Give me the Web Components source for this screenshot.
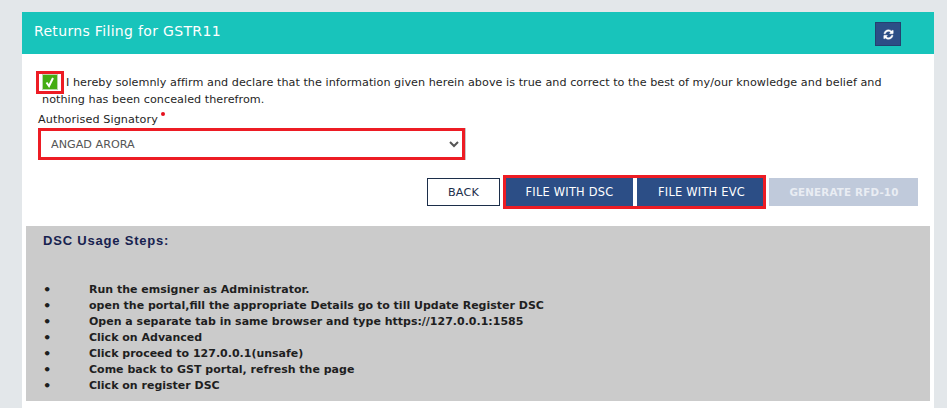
<!DOCTYPE html>
<html lang="en">
<head>
<meta charset="utf-8">
<title>Returns Filing for GSTR11</title>
<style>
  html, body { margin: 0; height: 408px; overflow: hidden; background: #e3e7ea; }
  body { font-family: "DejaVu Sans", Verdana, sans-serif; color: #1f1f1f; }
</style>
</head>
<body>
<filing-page>
  <filing-header title="Returns Filing for GSTR11"></filing-header>
  <filing-affirm>I hereby solemnly affirm and declare that the information given herein above is true and correct to the best of my/our knowledge and belief and nothing has been concealed therefrom.</filing-affirm>
  <filing-select label="Authorised Signatory" value="ANGAD ARORA"></filing-select>
  <filing-actions>
    <filing-button kind="back">BACK</filing-button>
    <filing-button kind="primary" mark="left">FILE WITH DSC</filing-button>
    <filing-button kind="primary" mark="right">FILE WITH EVC</filing-button>
    <filing-button kind="disabled">GENERATE RFD-10</filing-button>
  </filing-actions>
  <usage-steps heading="DSC Usage Steps:">
    <usage-step>Run the emsigner as Administrator.</usage-step>
    <usage-step>open the portal,fill the appropriate Details go to till Update Register DSC</usage-step>
    <usage-step>Open a separate tab in same browser and type https://127.0.0.1:1585</usage-step>
    <usage-step>Click on Advanced</usage-step>
    <usage-step>Click proceed to 127.0.0.1(unsafe)</usage-step>
    <usage-step>Come back to GST portal, refresh the page</usage-step>
    <usage-step>Click on register DSC</usage-step>
  </usage-steps>
</filing-page>
<script>
class FilingPage extends HTMLElement {
  constructor() {
    super();
    this.attachShadow({ mode: "open" }).innerHTML = /* html */`
    <style>
      :host { display: block; margin: 12px 13px 0 22px; background: #fff; height: 396px; overflow: hidden; }
    </style>
    <slot></slot>`;
  }
}

class FilingHeader extends HTMLElement {
  constructor() {
    super();
    this.attachShadow({ mode: "open" });
  }

  connectedCallback() {
    this.shadowRoot.innerHTML = /* html */`
    <style>
      :host {
        display: flex; align-items: center; justify-content: space-between;
        box-sizing: border-box; height: 42px; padding: 0 33px 0 12px;
        background: #18c4bb; color: #fff; font-size: 14px; letter-spacing: 0.33px;
      }
      span { position: relative; top: -2px; }
      button {
        display: flex; align-items: center; justify-content: center;
        box-sizing: border-box; width: 26px; height: 24px; padding: 0; margin-top: 2px;
        background: #2c4e86; border: 1px solid #24406f;
      }
    </style>
    <span>${this.getAttribute("title")}</span>
    <button aria-label="Refresh">
      <svg width="11" height="11" viewBox="0 0 1792 1792" fill="#fff" stroke="#fff" stroke-width="70">
        <path d="M1639 1056q0 5-1 7-64 268-268 434.5t-478 166.5q-146 0-282.5-55t-243.5-157l-129 129q-19 19-45 19t-45-19-19-45v-448q0-26 19-45t45-19h448q26 0 45 19t19 45-19 45l-137 137q71 66 161 102t187 36q134 0 250-65t186-179q11-17 53-117 8-23 30-23h192q13 0 22.5 9.5t9.5 22.5zm25-800v448q0 26-19 45t-45 19h-448q-26 0-45-19t-19-45 19-45l138-138q-148-137-349-137-134 0-250 65t-186 179q-11 17-53 117-8 23-30 23h-199q-13 0-22.5-9.5t-9.5-22.5v-7q65-268 270-434.5t480-166.5q146 0 284 55.5t245 156.5l130-129q19-19 45-19t45 19 19 45z"/>
      </svg>
    </button>`;
  }
}

class FilingAffirm extends HTMLElement {
  constructor() {
    super();
    this.attachShadow({ mode: "open" }).innerHTML = /* html */`
    <style>
      :host { display: block; margin: 20px 30px 0 20px; font-size: 11.2px; line-height: 17px; letter-spacing: 0.04px; }
      .box {
        display: inline-block; position: relative; width: 16px; height: 16px; margin: 0 8px 0 0; vertical-align: -4px;
        background: #44ad12; border: 1px solid #b9d8ab; box-sizing: border-box;
      }
      .box::after {
        content: ""; position: absolute; left: -7px; top: -4px; width: 22px; height: 17px;
        border: 3px solid #ed1c24;
      }
      svg { display: block; }
    </style>
    <span class="box"><svg width="14" height="14" viewBox="0 0 14 14" fill="none" stroke="#fff" stroke-width="2"><path d="M3.5 7.5l2.5 3.5 4-8"/></svg></span><slot></slot>`;
  }
}

class FilingSelect extends HTMLElement {
  constructor() {
    super();
    this.attachShadow({ mode: "open" });
  }

  connectedCallback() {
    const value = this.getAttribute("value");
    this.shadowRoot.innerHTML = /* html */`
    <style>
      :host { display: block; margin: 4px 0 0 16px; font-size: 11.2px; letter-spacing: 0.1px; }
      label { display: block; line-height: 15px; }
      i {
        display: inline-block; width: 4px; height: 4px; margin: 0 0 0 3px; border-radius: 50%;
        background: #e5101d; position: relative; top: -7px;
      }
      select {
        display: block; box-sizing: border-box; width: 427px; height: 32px; margin: 1px 0 0;
        padding: 0 0 0 6px; font: inherit; font-size: 11.2px; letter-spacing: 0; color: #555;
        background: #fff; border: 3px solid #ed1c24; border-radius: 0; box-shadow: 1px 0 0 #c8c8c8;
      }
    </style>
    <label for="s">${this.getAttribute("label")}<i aria-hidden="true"></i></label>
    <select id="s"><option>${value}</option></select>`;
  }
}

class FilingActions extends HTMLElement {
  constructor() {
    super();
    this.attachShadow({ mode: "open" }).innerHTML = /* html */`
    <style>
      :host { display: flex; justify-content: flex-end; gap: 3px; margin: 18px 16px 0 0; }
    </style>
    <slot></slot>`;
  }
}

class FilingButton extends HTMLElement {
  constructor() {
    super();
    this.attachShadow({ mode: "open" }).innerHTML = /* html */`
    <style>
      :host {
        display: flex; align-items: center; justify-content: center; box-sizing: border-box;
        position: relative; height: 28px; font-size: 11.2px; letter-spacing: 0.2px;
      }
      :host([kind="back"]) { width: 73px; background: #fff; border: 1px solid #1c2e4a; color: #1c2e4a; }
      :host([kind="primary"]) { background: #2c4e86; color: #fff; font-size: 11.4px; letter-spacing: 0.25px; }
      :host([mark="left"]) { width: 127px; margin-left: 3px; margin-right: 1px; }
      :host([mark="right"]) { width: 126px; margin-right: 3px; padding-left: 3px; }
      :host([kind="disabled"]) { width: 149px; padding-left: 1px; background: #c0cadb; color: #e9edf3; font-size: 10.3px; font-weight: 700; }
      :host([mark])::after {
        content: ""; position: absolute; top: -3px; bottom: -3px; border: 3px solid #ed1c24;
      }
      :host([mark="left"])::after { left: -3px; right: -2px; border-right: 0; }
      :host([mark="right"])::after { left: -2px; right: -3px; border-left: 0; }
    </style>
    <slot></slot>`;
  }
}

class UsageSteps extends HTMLElement {
  constructor() {
    super();
    this.attachShadow({ mode: "open" });
  }

  connectedCallback() {
    this.shadowRoot.innerHTML = /* html */`
    <style>
      :host {
        display: block; box-sizing: border-box; height: 175px; margin: 20px 4px 0 4px;
        padding: 7px 17px 0 17px; background: #cbcbcb;
      }
      h3 {
        margin: 0 0 33px; font: 700 13px/16px "Liberation Sans", Arial, sans-serif;
        letter-spacing: 0.8px; color: #17224f;
      }
    </style>
    <h3>${this.getAttribute("heading")}</h3>
    <slot></slot>`;
  }
}

class UsageStep extends HTMLElement {
  constructor() {
    super();
    this.attachShadow({ mode: "open" }).innerHTML = /* html */`
    <style>
      :host { display: flex; font-size: 11px; font-weight: 700; line-height: 16px; color: #1f1f1f; }
      b { flex: 0 0 46px; font-size: 13px; font-weight: 700; }
    </style>
    <b>•</b><span><slot></slot></span>`;
  }
}

customElements.define("filing-page", FilingPage);
customElements.define("filing-header", FilingHeader);
customElements.define("filing-affirm", FilingAffirm);
customElements.define("filing-select", FilingSelect);
customElements.define("filing-actions", FilingActions);
customElements.define("filing-button", FilingButton);
customElements.define("usage-steps", UsageSteps);
customElements.define("usage-step", UsageStep);
</script>
</body>
</html>
